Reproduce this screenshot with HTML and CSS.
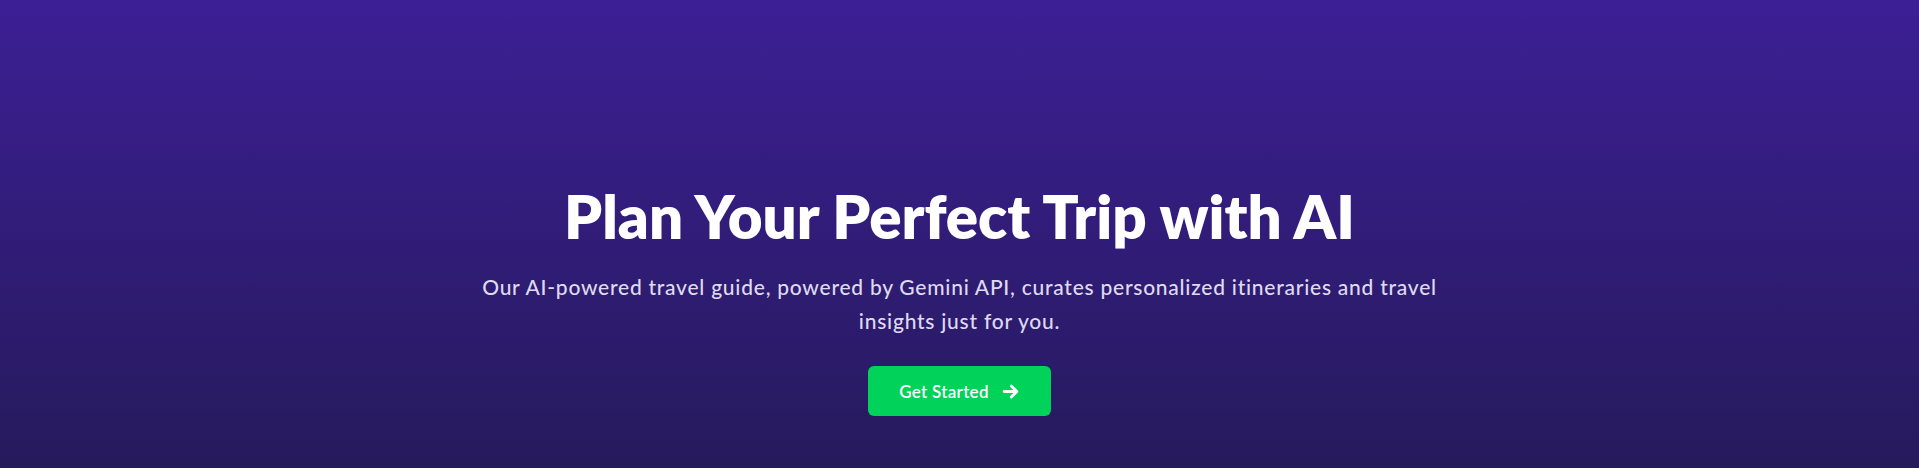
FILE: index.html
```html
<!DOCTYPE html>
<html lang="en">
<head>
<meta charset="utf-8">
<title>AI Travel Guide</title>
<link rel="stylesheet" href="styles.css">
</head>
<body>
<section class="hero">
  <h1 class="hero-title">Plan Your Perfect Trip with AI</h1>
  <p class="hero-text">Our AI-powered travel guide, powered by Gemini API, curates personalized itineraries and travel insights just for you.</p>
  <a class="hero-btn" href="#">
    <span>Get Started</span>
    <svg class="hero-btn-icon" viewBox="0 0 24 24" fill="none" stroke="currentColor" stroke-width="3.6" stroke-linecap="round" stroke-linejoin="round"><path d="M4 12h15"/><path d="M13 5l7 7-7 7"/></svg>
  </a>
</section>
</body>
</html>
```

FILE: styles.css
```css
* { box-sizing: border-box; }
html, body { margin: 0; padding: 0; }
body {
  font-family: Lato, "Open Sans", sans-serif;
  background: #261a5c;
}
.hero {
  height: 468px;
  background: linear-gradient(to bottom, #3c1f95 0%, #261a5c 100%);
  display: flex;
  flex-direction: column;
  align-items: center;
  padding-top: 186px;
  text-align: center;
}
.hero-title {
  margin: 0;
  color: #ffffff;
  font-size: 60px;
  line-height: 1;
  font-weight: 800;
  letter-spacing: 0;
}
.hero-text {
  margin: 24px 0 0;
  max-width: 980px;
  color: #dedaf0;
  font-size: 21px;
  line-height: 34px;
  font-weight: 500;
  letter-spacing: 0.75px;
}
.hero-btn {
  margin-top: 28px;
  display: flex;
  align-items: center;
  gap: 12px;
  height: 50px;
  padding: 0 31px;
  border-radius: 6px;
  background: #00d25a;
  color: #ffffff;
  text-decoration: none;
  font-size: 17px;
  font-weight: 600;
  letter-spacing: 0.3px;
}
.hero-btn-icon {
  width: 19px;
  height: 19px;
}
```
